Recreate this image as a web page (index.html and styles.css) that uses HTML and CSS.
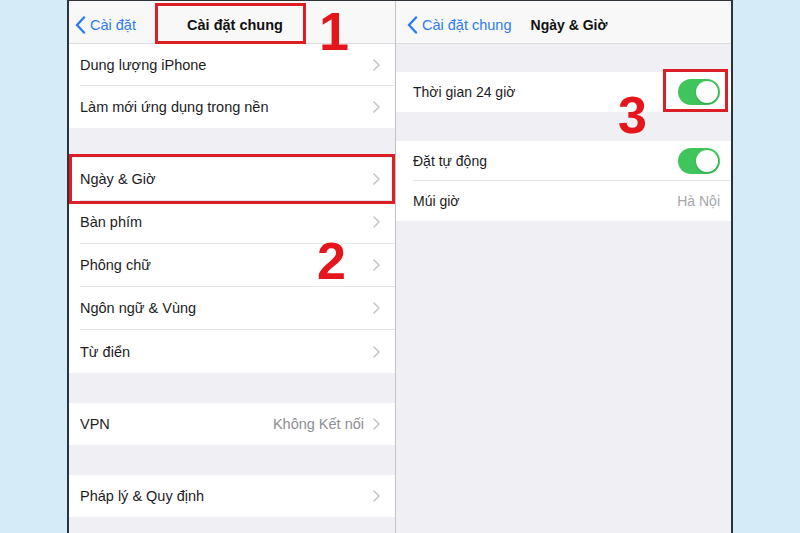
FILE: index.html
```html
<!DOCTYPE html>
<html lang="vi">
<head>
    <meta charset="UTF-8">
    <meta name="viewport" content="width=device-width, initial-scale=1.0">
    <title>Cài đặt chung - Ngày &amp; Giờ</title>
    <link rel="stylesheet" href="styles.css">
</head>
<body>
    <div class="frame">
        <section class="panel panel-left">
            <header class="nav nav-left">
                <span class="back">
                    <svg class="back-icon" width="11" height="18" viewBox="0 0 11 18"><polyline points="9,1.5 2,9 9,16.5" /></svg>
                    Cài đặt
                </span>
                <h1 class="title">Cài đặt chung</h1>
                <span></span>
            </header>

            <ul class="group">
                <li class="row"><div class="row-in"><span>Dung lượng iPhone</span><svg class="chev" width="7" height="12" viewBox="0 0 7 12"><polyline points="1,1 6,6 1,11" /></svg></div></li>
                <li class="row"><div class="row-in"><span>Làm mới ứng dụng trong nền</span><svg class="chev" width="7" height="12" viewBox="0 0 7 12"><polyline points="1,1 6,6 1,11" /></svg></div></li>
            </ul>

            <ul class="group group-tall">
                <li class="row"><div class="row-in"><span>Ngày &amp; Giờ</span><svg class="chev" width="7" height="12" viewBox="0 0 7 12"><polyline points="1,1 6,6 1,11" /></svg></div></li>
                <li class="row"><div class="row-in"><span>Bàn phím</span><svg class="chev" width="7" height="12" viewBox="0 0 7 12"><polyline points="1,1 6,6 1,11" /></svg></div></li>
                <li class="row"><div class="row-in"><span>Phông chữ</span><svg class="chev" width="7" height="12" viewBox="0 0 7 12"><polyline points="1,1 6,6 1,11" /></svg></div></li>
                <li class="row"><div class="row-in"><span>Ngôn ngữ &amp; Vùng</span><svg class="chev" width="7" height="12" viewBox="0 0 7 12"><polyline points="1,1 6,6 1,11" /></svg></div></li>
                <li class="row"><div class="row-in"><span>Từ điển</span><svg class="chev" width="7" height="12" viewBox="0 0 7 12"><polyline points="1,1 6,6 1,11" /></svg></div></li>
            </ul>

            <ul class="group">
                <li class="row"><div class="row-in"><span>VPN</span><span class="value">Không Kết nối<svg class="chev" width="7" height="12" viewBox="0 0 7 12"><polyline points="1,1 6,6 1,11" /></svg></span></div></li>
            </ul>

            <ul class="group group-last">
                <li class="row"><div class="row-in"><span>Pháp lý &amp; Quy định</span><svg class="chev" width="7" height="12" viewBox="0 0 7 12"><polyline points="1,1 6,6 1,11" /></svg></div></li>
            </ul>
        </section>

        <section class="panel panel-right">
            <header class="nav nav-right">
                <span class="back">
                    <svg class="back-icon" width="11" height="18" viewBox="0 0 11 18"><polyline points="9,1.5 2,9 9,16.5" /></svg>
                    Cài đặt chung
                </span>
                <h1 class="title">Ngày &amp; Giờ</h1>
                <span></span>
            </header>

            <ul class="group">
                <li class="row"><div class="row-in"><span>Thời gian 24 giờ</span><span class="switch"></span></div></li>
            </ul>

            <ul class="group">
                <li class="row"><div class="row-in"><span>Đặt tự động</span><span class="switch"></span></div></li>
                <li class="row"><div class="row-in"><span>Múi giờ</span><span class="value value-light">Hà Nội</span></div></li>
            </ul>
        </section>

        <div class="mark-box box-1"></div>
        <div class="mark-box box-2"></div>
        <div class="mark-box box-3"></div>
        <span class="mark mark-1">1</span>
        <span class="mark mark-2">2</span>
        <span class="mark mark-3">3</span>
    </div>
</body>
</html>
```

FILE: styles.css
```css
body {
    margin: 0;
    height: 533px;
    overflow: hidden;
    background-color: #d5ecf8;
    font-family: "Liberation Sans", Arial, sans-serif;
    color: #1c1c1e;
}
.frame {
    position: relative;
    display: flex;
    width: 662px;
    height: 532px;
    margin-left: 67px;
    border-style: solid;
    border-color: #2e3337;
    border-width: 1px 2px 0 2px;
    background: #efeff4;
}
.panel {
    height: 100%;
}
.panel-left {
    width: 326px;
    border-right: 1px solid #c3c3c7;
}
.panel-right {
    flex: 1;
}

/* nav bar */
.nav {
    display: grid;
    grid-template-columns: 1fr auto 1fr;
    align-items: center;
    height: 37px;
    padding-top: 5px;
    background: #f8f8f9;
    border-bottom: 1px solid #dcdce0;
}
.nav-left {
    padding-left: 6px;
}
.nav-right {
    padding-left: 11px;
}
.back {
    display: flex;
    align-items: center;
    gap: 4px;
    color: #2d7cf0;
    font-size: 14.5px;
    white-space: nowrap;
}
.back-icon polyline {
    fill: none;
    stroke: #2d7cf0;
    stroke-width: 2.4;
    stroke-linecap: round;
    stroke-linejoin: round;
}
.title {
    margin: 0;
    font-size: 14.5px;
    font-weight: bold;
    color: #111;
}
.nav-right .title {
    font-size: 14px;
}

/* groups and rows */
.group {
    list-style: none;
    margin: 0;
    padding: 0;
    background: #fff;
}
.group + .group {
    margin-top: 30px;
}
.row {
    display: flex;
    height: 42px;
    padding-left: 11px;
    font-size: 14.5px;
}
.group-tall .row {
    height: 43px;
}
.row-in {
    flex: 1;
    display: flex;
    align-items: center;
    justify-content: space-between;
    padding-right: 15px;
    border-bottom: 1px solid #e4e4e8;
}
.row:last-child .row-in {
    border-bottom: none;
}
.chev polyline {
    fill: none;
    stroke: #c4c4c8;
    stroke-width: 1.5;
    stroke-linecap: round;
    stroke-linejoin: round;
}
.value {
    display: flex;
    align-items: center;
    gap: 9px;
    color: #8e8e93;
}
.value-light {
    color: #a5a5aa;
}

.panel-right .group {
    margin-top: 28px;
}
.panel-right .group + .group {
    margin-top: 29px;
}
.panel-right .row {
    height: 40px;
    padding-left: 17px;
    font-size: 14px;
}
.panel-right .row-in {
    padding-right: 11px;
}

/* toggle */
.switch {
    position: relative;
    width: 42px;
    height: 26px;
    border-radius: 13px;
    background: #3fc55b;
}
.switch::after {
    content: "";
    position: absolute;
    top: 2px;
    right: 2px;
    width: 22px;
    height: 22px;
    border-radius: 50%;
    background: #fff;
    box-shadow: 0 1px 2px rgba(0, 0, 0, 0.2);
}

/* red annotations */
.mark-box {
    position: absolute;
    box-sizing: border-box;
    border: 3px solid #dc1f26;
}
.box-1 {
    left: 86px;
    top: 2px;
    width: 151px;
    height: 41px;
}
.box-2 {
    left: 0;
    top: 153px;
    width: 326px;
    height: 50px;
}
.box-3 {
    left: 594px;
    top: 68px;
    width: 65px;
    height: 43px;
}
.mark {
    position: absolute;
    color: #e5151c;
    font-weight: bold;
    font-size: 55px;
    line-height: 1;
}
.mark-1 {
    left: 250px;
    top: 3px;
    font-size: 54px;
}
.mark-2 {
    left: 248px;
    top: 234px;
    font-size: 52px;
    text-shadow: 0 0 8px #fff, 0 0 16px #fff;
}
.mark-3 {
    left: 549px;
    top: 88px;
    font-size: 52px;
}
```
